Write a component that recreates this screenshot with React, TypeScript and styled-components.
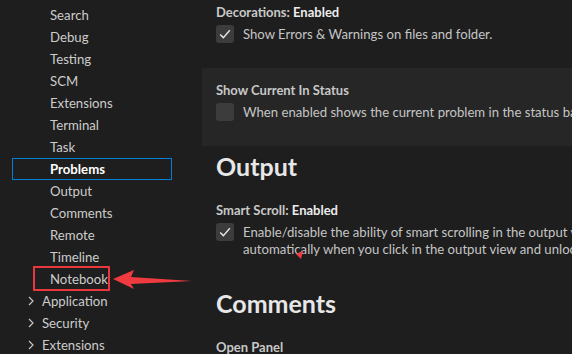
import React from "react";
import styled, { createGlobalStyle } from "styled-components";

const GlobalStyle = createGlobalStyle`
  html, body {
    margin: 0;
    padding: 0;
    background: #1e1e1e;
    overflow: hidden;
  }
  body {
    font-family: "Segoe UI", Lato, "Noto Sans", sans-serif;
    color: #cccccc;
  }
`;

const Page = styled.div`
  display: flex;
  width: 572px;
  height: 354px;
  overflow: hidden;
  position: relative;
  background: #1e1e1e;
`;

const Sidebar = styled.div`
  width: 202px;
  flex-shrink: 0;
  padding-left: 12px;
  box-sizing: border-box;
`;

const TreeList = styled.div`
  margin-top: -18px;
  width: 160px;
`;

const TreeRow = styled.div<{ $selected?: boolean; $top?: boolean }>`
  display: flex;
  align-items: center;
  height: 22px;
  box-sizing: border-box;
  padding-left: ${(p) => (p.$top ? "10px" : "37px")};
  font-size: 13.2px;
  font-weight: ${(p) => (p.$selected ? 700 : 400)};
  color: ${(p) => (p.$selected ? "#ffffff" : "#cccccc")};
  border: 1px solid ${(p) => (p.$selected ? "#007fd4" : "transparent")};
  white-space: nowrap;
  position: relative;
`;

const Chevron = styled.svg`
  width: 16px;
  height: 16px;
  margin-right: 3px;
  flex-shrink: 0;
`;

const Highlight = styled.span`
  position: absolute;
  left: 20px;
  top: -3px;
  width: 77px;
  height: 25px;
  border: 2px solid #e8383d;
  box-sizing: border-box;
`;

const Main = styled.div`
  flex: 1;
  min-width: 0;
  overflow: hidden;
`;

const Content = styled.div`
  margin-top: -10px;
`;

const SettingRow = styled.div<{ $focused?: boolean }>`
  padding: 13px 14px 25px 14px;
  background: ${(p) => (p.$focused ? "#262626" : "transparent")};
`;

const Label = styled.div`
  font-size: 13px;
  line-height: 18px;
  font-weight: 700;
  color: #c8c8c8;
  white-space: nowrap;
`;

const Value = styled.span`
  color: #ececec;
  font-weight: 700;
`;

const CheckLine = styled.div`
  display: flex;
  align-items: flex-start;
  gap: 9px;
  margin-top: 4px;
`;

const Box = styled.div`
  width: 18px;
  height: 18px;
  border-radius: 3px;
  background: #3c3c3c;
  flex-shrink: 0;
  display: flex;
  align-items: center;
  justify-content: center;
`;

const Description = styled.div`
  font-size: 13.15px;
  line-height: 17px;
  color: #c5c5c5;
  white-space: nowrap;
  padding-top: 1px;
`;

const SectionTitle = styled.h2`
  margin: 0;
  padding: 5px 14px 7px 14px;
  font-size: 25px;
  line-height: 30px;
  font-weight: 700;
  color: #e7e7e7;
`;

const Overlay = styled.svg`
  position: absolute;
  left: 0;
  top: 0;
  pointer-events: none;
`;

const sections = [
  "Explorer",
  "Search",
  "Debug",
  "Testing",
  "SCM",
  "Extensions",
  "Terminal",
  "Task",
  "Problems",
  "Output",
  "Comments",
  "Remote",
  "Timeline",
  "Notebook",
];

const topLevel = ["Application", "Security", "Extensions"];

const Check = () => (
  <svg width="14" height="14" viewBox="0 0 14 14">
    <path d="M2.2 7.4 L5.4 10.6 L11.8 3.2" fill="none" stroke="#e6e6e6" strokeWidth="1.4" />
  </svg>
);

const ChevronRight = () => (
  <Chevron viewBox="0 0 16 16">
    <path d="M6 4 L10 8 L6 12" fill="none" stroke="#c5c5c5" strokeWidth="1.2" />
  </Chevron>
);

const App: React.FC = () => {
  return (
    <>
      <GlobalStyle />
      <Page>
        <Sidebar>
          <TreeList>
            {sections.map((s) => (
              <TreeRow key={s} $selected={s === "Problems"}>
                {s}
                {s === "Notebook" && <Highlight />}
              </TreeRow>
            ))}
            {topLevel.map((s) => (
              <TreeRow key={s} $top>
                <ChevronRight />
                {s}
              </TreeRow>
            ))}
          </TreeList>
        </Sidebar>
        <Main>
          <Content>
            <SettingRow>
              <Label>
                Decorations: <Value>Enabled</Value>
              </Label>
              <CheckLine>
                <Box>
                  <Check />
                </Box>
                <Description>Show Errors &amp; Warnings on files and folder.</Description>
              </CheckLine>
            </SettingRow>
            <SettingRow $focused>
              <Label>Show Current In Status</Label>
              <CheckLine>
                <Box />
                <Description>
                  When enabled shows the current problem in the status bar.
                </Description>
              </CheckLine>
            </SettingRow>
            <SectionTitle>Output</SectionTitle>
            <SettingRow>
              <Label>
                Smart Scroll: <Value>Enabled</Value>
              </Label>
              <CheckLine>
                <Box>
                  <Check />
                </Box>
                <Description>
                  Enable/disable the ability of smart scrolling in the output view. Smart
                  scrolling allows you to lock scrolling
                  <br />
                  automatically when you click in the output view and unlocks when you click
                  in the last line.
                </Description>
              </CheckLine>
            </SettingRow>
            <SectionTitle>Comments</SectionTitle>
            <SettingRow>
              <Label>Open Panel</Label>
            </SettingRow>
          </Content>
        </Main>
        <Overlay width="572" height="354">
          <polygon
            points="113,279 134,270 131,277 192,281 131,284 134,289"
            fill="#ef3b3f"
          />
          <polygon points="296,254 303,251 301,259" fill="#ef3b3f" />
        </Overlay>
      </Page>
    </>
  );
};

export default App;
